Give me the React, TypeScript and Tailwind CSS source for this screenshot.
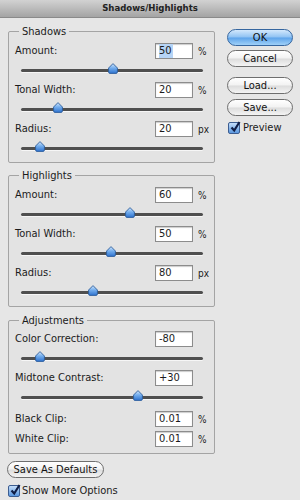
import React from "react";

const font = "font-['DejaVu_Sans_Condensed','Liberation_Sans',sans-serif]";

type Param = { label: string; value: string; unit?: string; pos?: number; selected?: boolean };

const groups: { title: string; params: Param[] }[] = [
  {
    title: "Shadows",
    params: [
      { label: "Amount:", value: "50", unit: "%", pos: 50.3, selected: true },
      { label: "Tonal Width:", value: "20", unit: "%", pos: 20.4 },
      { label: "Radius:", value: "20", unit: "px", pos: 10.5 },
    ],
  },
  {
    title: "Highlights",
    params: [
      { label: "Amount:", value: "60", unit: "%", pos: 59.7 },
      { label: "Tonal Width:", value: "50", unit: "%", pos: 49.7 },
      { label: "Radius:", value: "80", unit: "px", pos: 39.8 },
    ],
  },
  {
    title: "Adjustments",
    params: [
      { label: "Color Correction:", value: "-80", pos: 10.5 },
      { label: "Midtone Contrast:", value: "+30", pos: 64.1 },
      { label: "Black Clip:", value: "0.01", unit: "%" },
      { label: "White Clip:", value: "0.01", unit: "%" },
    ],
  },
];

const groupClass = [
  "rounded-[2px] border border-[#a4a4a4] bg-[#e3e3e3] pt-[5px] pb-[2px]",
  "mt-[6px] rounded-[2px] border border-[#a4a4a4] bg-[#e3e3e3] pt-[5px] pb-[2px]",
  "mt-[7px] rounded-[2px] border border-[#a4a4a4] bg-[#e3e3e3] pt-[4px] pb-[6px]",
];

function Thumb() {
  return (
    <svg width="10" height="11" viewBox="0 0 10 11">
      <defs>
        <linearGradient id="thumbGrad" x1="0" y1="0" x2="0" y2="1">
          <stop offset="0" stopColor="#d4e8fc" />
          <stop offset="0.45" stopColor="#74aeee" />
          <stop offset="1" stopColor="#2f73cf" />
        </linearGradient>
      </defs>
      <path
        d="M5 0.6 L9.4 5 V9 Q9.4 10.4 8 10.4 H2 Q0.6 10.4 0.6 9 V5 Z"
        fill="url(#thumbGrad)"
        stroke="#2b5c9c"
        strokeWidth="0.9"
        strokeLinejoin="round"
      />
    </svg>
  );
}

function Slider({ pos }: { pos: number }) {
  return (
    <div className="h-[23px] pt-[10px] pl-[12px] pr-[11px]">
      <div className="relative h-[3px] rounded-full bg-[#4f4f4f] shadow-[0_1px_0_#f6f6f6]">
        <div className="absolute bottom-[-2px] -translate-x-1/2" style={{ left: `${pos}%` }}>
          <Thumb />
        </div>
      </div>
    </div>
  );
}

function Field({ value, selected }: { value: string; selected?: boolean }) {
  return (
    <div className="h-[16px] w-[38px] border border-[#8c8c8c] bg-white pl-[3px] text-[11px] leading-[14px] shadow-[inset_0_1px_1px_rgba(0,0,0,0.2)]">
      {selected ? <span className="inline-block bg-[#b6d4f6] pr-[1px]">{value}</span> : value}
    </div>
  );
}

function Row({ p, className }: { p: Param; className?: string }) {
  return (
    <div className={className}>
      <div className="flex h-[16px] items-center pl-[6px]">
        <span className="flex-1 text-[11px]">{p.label}</span>
        <Field value={p.value} selected={p.selected} />
        <span className="w-[21px] pl-[5px] text-[10px]">{p.unit}</span>
      </div>
      {p.pos !== undefined && <Slider pos={p.pos} />}
    </div>
  );
}

function CheckBox() {
  return (
    <span className="relative inline-flex h-[12px] w-[12px] shrink-0 rounded-[2px] border border-[#3c5d91] bg-[linear-gradient(#c4defa,#5a97df)]">
      <svg className="absolute left-[1px] top-[-2px]" width="11" height="12" viewBox="0 0 11 12">
        <path d="M1.5 6.5 L4.2 9.5 L9.5 1" fill="none" stroke="#0f1d45" strokeWidth="2.2" />
      </svg>
    </span>
  );
}

function AquaButton({ children, primary, className = "" }: { children: React.ReactNode; primary?: boolean; className?: string }) {
  const look = primary
    ? "border-[#36669f] bg-[linear-gradient(#d3e8fc,#8fc2f3_48%,#5da3ea_52%,#9fd0f8)]"
    : "border-[#6e6e6e] bg-[linear-gradient(#ffffff,#f2f2f2_48%,#dcdcdc_52%,#f4f4f4)]";
  return (
    <button className={`block h-[17px] w-[66px] rounded-full border text-[11px] leading-none text-[#111] ${look} ${className}`}>
      {children}
    </button>
  );
}

export default function App() {
  return (
    <div className={`h-[500px] w-[300px] overflow-hidden bg-[#e6e6e6] text-[#1b1b1b] ${font}`}>
      <div className="flex h-[18px] items-center justify-center border-b border-[#8a8a8a] bg-[linear-gradient(#d2d2d2,#a4a4a4)] text-[9.5px] font-bold text-[#222]">
        Shadows/Highlights
      </div>
      <div className="flex pl-[8px] pt-[7px]">
        <div className="w-[207px]">
          {groups.map((g, i) => (
            <fieldset key={g.title} className={groupClass[i]}>
              <legend className="ml-[10px] px-[3px] text-[11px] leading-[13px]">{g.title}</legend>
              {g.params.map((p, j) => (
                <Row
                  key={p.label}
                  p={p}
                  className={i === 2 && j === 2 ? "mt-[2px]" : i === 2 && j === 3 ? "mt-[4px]" : ""}
                />
              ))}
            </fieldset>
          ))}
          <button className="-ml-[1px] mt-[7px] block h-[17px] w-[97px] rounded-full border border-[#6e6e6e] bg-[linear-gradient(#ffffff,#f2f2f2_48%,#dcdcdc_52%,#f4f4f4)] text-[11px] leading-none text-[#111]">
            Save As Defaults
          </button>
          <div className="mt-[6px] flex h-[14px] items-center gap-[2px] text-[11px] leading-[14px]">
            <CheckBox />
            <span>Show More Options</span>
          </div>
        </div>
        <div className="ml-[12px] mt-[4px] flex flex-col">
          <AquaButton primary>OK</AquaButton>
          <AquaButton className="mt-[4px]">Cancel</AquaButton>
          <AquaButton className="mt-[10px]">Load...</AquaButton>
          <AquaButton className="mt-[5px]">Save...</AquaButton>
          <div className="mt-[5px] flex h-[14px] items-center gap-[3px] pl-[1px] text-[11px] leading-[14px]">
            <CheckBox />
            <span>Preview</span>
          </div>
        </div>
      </div>
    </div>
  );
}
